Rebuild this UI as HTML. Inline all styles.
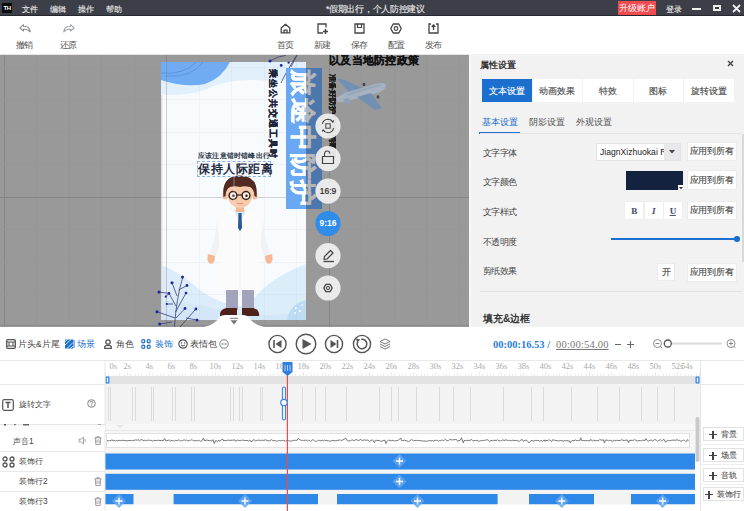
<!DOCTYPE html>
<html><head><meta charset="utf-8">
<style>
*{box-sizing:border-box;margin:0;padding:0}
html,body{width:744px;height:511px;overflow:hidden;background:#fff;font-family:"Liberation Sans",sans-serif;font-size:9px;color:#333}
.a{position:absolute}
#top{left:0;top:0;width:744px;height:16px;background:#3c3f47;border-bottom:1px solid #25282e}
#tool{left:0;top:16px;width:744px;height:39px;background:#fff}
#canvas{left:0;top:55px;width:469px;height:272px;background:#999;overflow:hidden}
#panel{left:469px;top:54px;width:275px;height:273px;background:#f2f2f2}
#tl{left:0;top:327px;width:744px;height:184px;background:#fff}
.menu{color:#ececec;font-size:8.4px;top:3.6px;line-height:11px;font-weight:500}
.tt{top:23.5px;font-size:8.5px;letter-spacing:-0.6px;color:#555;line-height:10px;white-space:nowrap}
.tb .t{position:absolute;top:24px;left:0;width:30px;text-align:center;font-size:9px;color:#555;line-height:10px}
.tab{top:25px;width:49.5px;height:23px;background:#fff;color:#444;font-size:8.8px;line-height:24px;text-align:center}
.tab.on{background:#1a6fcf;color:#fff}
.stab{top:62px;font-size:9px;color:#555;line-height:12px}
.lbl{left:14px;font-size:8.5px;letter-spacing:-0.7px;color:#444;line-height:11px;margin-top:1px}
.btn{background:#fff;border:1px solid #ebebeb;color:#444;font-size:8.5px;letter-spacing:-0.3px;text-align:center;display:flex;align-items:center;justify-content:center;white-space:nowrap;padding-top:2px}
.tbt{top:12px;font-size:8.5px;color:#444;line-height:10px;white-space:nowrap}
.rl{top:0px;font-family:"Liberation Serif",serif;font-size:8.5px;color:#aaa;line-height:10px;white-space:nowrap}
.lt{font-size:8.4px;color:#444;line-height:10px;white-space:nowrap}
.rb{left:703px;width:41px;height:14px;background:#fff;border:1px solid #e2e2e2;font-size:8px;color:#555;line-height:12px;white-space:nowrap}
.rb i{position:absolute;left:5px;top:2.5px;width:8px;height:8px}
.rb i:before{content:"";position:absolute;left:0;top:3.2px;width:8px;height:1.6px;background:#444}
.rb i:after{content:"";position:absolute;left:3.2px;top:0;width:1.6px;height:8px;background:#444}
.rb b{position:absolute;right:6px;top:1px;font-weight:normal}
.menu,.tab,.btn,.rb{-webkit-text-stroke:0.12px currentColor}
</style></head><body>
<!-- top bar -->
<div id="top" class="a">
  <div class="a" style="left:2px;top:3px;width:10px;height:10px;background:#0b0b0b;color:#fff;font-size:6px;font-weight:bold;line-height:10px;text-align:center;letter-spacing:-0.5px">TH</div>
  <div class="a menu" style="left:22px">文件</div>
  <div class="a menu" style="left:50px">编辑</div>
  <div class="a menu" style="left:78px">操作</div>
  <div class="a menu" style="left:106px">帮助</div>
  <div class="a menu" style="left:326px;font-size:8.6px;top:3.5px;letter-spacing:-0.3px">*假期出行，个人防控建议</div>
  <div class="a" style="left:618px;top:1px;width:38px;height:14px;background:#f04c50;color:#fff;font-size:9px;line-height:14px;text-align:center">升级账户</div>
  <div class="a menu" style="left:666px">登录</div>
  <div class="a" style="left:692px;top:8px;width:9px;height:2px;background:#eee"></div>
  <div class="a" style="left:713px;top:5px;width:8px;height:6px;border:2px solid #eee"></div>
  <svg class="a" style="left:732px;top:4px" width="9" height="9" viewBox="0 0 9 9"><path d="M1 1L8 8M8 1L1 8" stroke="#eee" stroke-width="1.8"/></svg>
</div>
<!-- toolbar -->
<div id="tool" class="a">
  <svg class="a" style="left:19px;top:8px" width="13" height="9" viewBox="0 0 13 9"><path d="M4.5 0.7L0.8 3.8L4.5 7V5.2Q9 5 11.2 7.8Q11 2.3 4.5 2.3Z" fill="#fff" stroke="#8a8a8a" stroke-width="1.1" stroke-linejoin="round"/></svg>
  <div class="a tt" style="left:16px;width:17px">撤销</div>
  <svg class="a" style="left:62px;top:8px" width="13" height="9" viewBox="0 0 13 9"><path d="M8.5 0.7L12.2 3.8L8.5 7V5.2Q4 5 1.8 7.8Q2 2.3 8.5 2.3Z" fill="#fff" stroke="#9a9fa8" stroke-width="1.1" stroke-linejoin="round"/></svg>
  <div class="a tt" style="left:60px;width:17px">还原</div>
  <svg class="a" style="left:280px;top:7px" width="11" height="11" viewBox="0 0 11 11"><path d="M1.2 5L5.5 1.2L9.8 5V9.8H1.2Z M4 9.8V7.2H7V9.8" fill="none" stroke="#444" stroke-width="1.3" stroke-linejoin="round"/></svg>
  <div class="a tt" style="left:277px;width:17px">首页</div>
  <svg class="a" style="left:317px;top:7px" width="12" height="11" viewBox="0 0 12 11"><path d="M9 4.5V1H1V10H6" fill="none" stroke="#444" stroke-width="1.3"/><path d="M8.5 6V11M6 8.5H11" fill="none" stroke="#444" stroke-width="1.5"/></svg>
  <div class="a tt" style="left:314px;width:17px">新建</div>
  <svg class="a" style="left:354px;top:7px" width="11" height="11" viewBox="0 0 11 11"><path d="M1 1H10V10H1Z" fill="none" stroke="#444" stroke-width="1.3"/><path d="M3.5 1V4.5H7.5V1" fill="none" stroke="#444" stroke-width="1.2"/></svg>
  <div class="a tt" style="left:351px;width:17px">保存</div>
  <svg class="a" style="left:390px;top:7px" width="12" height="11" viewBox="0 0 12 11"><path d="M3.2 1H8.8L11.2 5.5L8.8 10H3.2L0.8 5.5Z" fill="none" stroke="#444" stroke-width="1.3" stroke-linejoin="round"/><circle cx="6" cy="5.5" r="1.8" fill="none" stroke="#444" stroke-width="1.2"/></svg>
  <div class="a tt" style="left:388px;width:17px">配置</div>
  <svg class="a" style="left:428px;top:7px" width="11" height="11" viewBox="0 0 11 11"><path d="M3 1H1V10H10V1H8" fill="none" stroke="#444" stroke-width="1.3"/><path d="M5.5 7V2M3.7 3.8L5.5 2L7.3 3.8" fill="none" stroke="#444" stroke-width="1.3"/></svg>
  <div class="a tt" style="left:425px;width:17px">发布</div>
  <div class="a" style="left:0;top:38px;width:744px;height:1px;background:#e6e6e6"></div>
</div>
<!-- canvas -->
<div id="canvas" class="a">
<svg class="a" style="left:0;top:0" width="469" height="272" viewBox="0 55 469 272">
<defs><clipPath id="pc"><rect x="161" y="62" width="145" height="258"/></clipPath></defs>
<rect x="0" y="55" width="469" height="272" fill="#999"/>
<g shape-rendering="crispEdges"><line x1="0" y1="325.5" x2="469" y2="325.5" stroke="#8c8c8c"/><line x1="4.0" y1="55" x2="4.0" y2="327" stroke="#868686" stroke-width="1"/><line x1="36.5" y1="55" x2="36.5" y2="327" stroke="#959595" stroke-width="1"/><line x1="69.0" y1="55" x2="69.0" y2="327" stroke="#959595" stroke-width="1"/><line x1="101.5" y1="55" x2="101.5" y2="327" stroke="#959595" stroke-width="1"/><line x1="134.0" y1="55" x2="134.0" y2="327" stroke="#959595" stroke-width="1"/><line x1="166.5" y1="55" x2="166.5" y2="327" stroke="#868686" stroke-width="1"/><line x1="199.0" y1="55" x2="199.0" y2="327" stroke="#959595" stroke-width="1"/><line x1="231.5" y1="55" x2="231.5" y2="327" stroke="#959595" stroke-width="1"/><line x1="264.0" y1="55" x2="264.0" y2="327" stroke="#959595" stroke-width="1"/><line x1="296.5" y1="55" x2="296.5" y2="327" stroke="#959595" stroke-width="1"/><line x1="329.0" y1="55" x2="329.0" y2="327" stroke="#868686" stroke-width="1"/><line x1="361.5" y1="55" x2="361.5" y2="327" stroke="#959595" stroke-width="1"/><line x1="394.0" y1="55" x2="394.0" y2="327" stroke="#959595" stroke-width="1"/><line x1="426.5" y1="55" x2="426.5" y2="327" stroke="#959595" stroke-width="1"/><line x1="459.0" y1="55" x2="459.0" y2="327" stroke="#959595" stroke-width="1"/><line x1="0" y1="67.0" x2="469" y2="67.0" stroke="#979797" stroke-width="1"/><line x1="0" y1="99.5" x2="469" y2="99.5" stroke="#979797" stroke-width="1"/><line x1="0" y1="132.0" x2="469" y2="132.0" stroke="#979797" stroke-width="1"/><line x1="0" y1="164.5" x2="469" y2="164.5" stroke="#979797" stroke-width="1"/><line x1="0" y1="197.0" x2="469" y2="197.0" stroke="#868686" stroke-width="1"/><line x1="0" y1="229.5" x2="469" y2="229.5" stroke="#979797" stroke-width="1"/><line x1="0" y1="262.0" x2="469" y2="262.0" stroke="#979797" stroke-width="1"/><line x1="0" y1="294.5" x2="469" y2="294.5" stroke="#979797" stroke-width="1"/></g>
<g clip-path="url(#pc)">
  <rect x="161" y="62" width="145" height="258" fill="#f7fbfd"/>
  <!-- top light band -->
  <path d="M161 62H306V78Q280 82 255 80Q225 79 205 90Q180 97 161 94Z" fill="#e2f0fb"/>
  <!-- top blue -->
  <path d="M161 62H230Q222 78 205 84Q185 88 161 80Z" fill="#70acf4"/>
  <path d="M161 73Q185 75 196 62M166 76Q192 78 203 62" fill="none" stroke="#4f86cf" stroke-width="0.6"/>
  <!-- bottom waves -->
  <path d="M161 265Q180 272 200 290Q220 305 245 307Q280 310 306 300V320H161Z" fill="#dcecfa"/>
  <path d="M306 264Q285 272 270 283Q255 295 248 306Q245 315 250 320H306Z" fill="#dcedfa"/>
  <path d="M161 300Q200 304 230 312Q260 318 306 312V320H161Z" fill="#d3e7f8"/>
  <path d="M306 300Q290 304 287 320H306Z" fill="#bedbf4"/>
  <circle cx="296" cy="308" r="1" fill="#fff"/><circle cx="300" cy="311" r="0.9" fill="#fff"/><circle cx="295" cy="313" r="0.9" fill="#fff"/><circle cx="302" cy="305" r="0.8" fill="#fff"/>
  <!-- grid overlay on poster -->
  <g shape-rendering="crispEdges" opacity="0.07"><line x1="4.0" y1="55" x2="4.0" y2="327" stroke="#868686" stroke-width="1"/><line x1="36.5" y1="55" x2="36.5" y2="327" stroke="#959595" stroke-width="1"/><line x1="69.0" y1="55" x2="69.0" y2="327" stroke="#959595" stroke-width="1"/><line x1="101.5" y1="55" x2="101.5" y2="327" stroke="#959595" stroke-width="1"/><line x1="134.0" y1="55" x2="134.0" y2="327" stroke="#959595" stroke-width="1"/><line x1="166.5" y1="55" x2="166.5" y2="327" stroke="#868686" stroke-width="1"/><line x1="199.0" y1="55" x2="199.0" y2="327" stroke="#959595" stroke-width="1"/><line x1="231.5" y1="55" x2="231.5" y2="327" stroke="#959595" stroke-width="1"/><line x1="264.0" y1="55" x2="264.0" y2="327" stroke="#959595" stroke-width="1"/><line x1="296.5" y1="55" x2="296.5" y2="327" stroke="#959595" stroke-width="1"/><line x1="329.0" y1="55" x2="329.0" y2="327" stroke="#868686" stroke-width="1"/><line x1="361.5" y1="55" x2="361.5" y2="327" stroke="#959595" stroke-width="1"/><line x1="394.0" y1="55" x2="394.0" y2="327" stroke="#959595" stroke-width="1"/><line x1="426.5" y1="55" x2="426.5" y2="327" stroke="#959595" stroke-width="1"/><line x1="459.0" y1="55" x2="459.0" y2="327" stroke="#959595" stroke-width="1"/><line x1="0" y1="67.0" x2="469" y2="67.0" stroke="#979797" stroke-width="1"/><line x1="0" y1="99.5" x2="469" y2="99.5" stroke="#979797" stroke-width="1"/><line x1="0" y1="132.0" x2="469" y2="132.0" stroke="#979797" stroke-width="1"/><line x1="0" y1="164.5" x2="469" y2="164.5" stroke="#979797" stroke-width="1"/><line x1="0" y1="197.0" x2="469" y2="197.0" stroke="#868686" stroke-width="1"/><line x1="0" y1="229.5" x2="469" y2="229.5" stroke="#979797" stroke-width="1"/><line x1="0" y1="262.0" x2="469" y2="262.0" stroke="#979797" stroke-width="1"/><line x1="0" y1="294.5" x2="469" y2="294.5" stroke="#979797" stroke-width="1"/></g>
  <rect x="161" y="95" width="1.5" height="225" fill="#e0e0e0"/><line x1="166.5" y1="62" x2="166.5" y2="320" stroke="#7d7d7d" stroke-width="1" opacity="0.3" shape-rendering="crispEdges"/><line x1="161" y1="197" x2="306" y2="197" stroke="#7d7d7d" stroke-width="1" opacity="0.25" shape-rendering="crispEdges"/>
</g>

<!-- outside elements (dimmed) -->
<g>
  <!-- plane -->
  <g>
    <path d="M337 78.5L345 80L365 89.5L351 94Z" fill="#7290b3"/>
    <path d="M341 89L344 89L349 96L345 98Z" fill="#8aa0bb"/>
    <path d="M336 98L346 92.5L377 83.5Q386 82 386 86Q385 90.5 377 93L348 101L338 102.5Z" fill="#a6b2c1"/>
    <path d="M346 93.5L376 85Q381 84 383 85L348 96Z" fill="#98a8bb"/>
    <path d="M357 97L371 93L382 108.5L375 110Z" fill="#7290b3"/>
    <path d="M343 99L349 98L350 104L347 104Z" fill="#8aa0bb"/>
    <ellipse cx="364" cy="84.5" rx="1.4" ry="1.8" fill="#445"/>
    <ellipse cx="378" cy="97" rx="1.4" ry="1.8" fill="#445"/>
  </g>
</g>

<!-- top plant -->
<g stroke="#3d3f6d" stroke-width="0.8" fill="none"><path d="M270 61Q278 56 286 55.3"/><path d="M281 83Q286 72 297 55"/><path d="M291 67L297 55"/></g>
<g fill="#1f23a8"><circle cx="270" cy="61" r="1.5"/><circle cx="281.2" cy="65.4" r="1.4"/><circle cx="288.6" cy="62.7" r="1.1"/></g>
<!-- plant -->
<g stroke="#3b3f70" stroke-width="0.8" fill="none">
  <path d="M174.5 327Q176 300 183 276"/>
  <path d="M177 296L172 282.7M178.5 290L187 285.5M176 306L169 293.4L159 292M169 293.4L165.8 296.7M175.5 312L186 293M175 318L157 311.7M172 322L159.7 324M176 318L185 308.5M180 327L195.9 309M186 318L197 320M173 304L166.8 304"/>
</g>
<g fill="#1f23a8">
  <circle cx="182.5" cy="277" r="1.5"/><circle cx="172" cy="282.7" r="1.5"/><circle cx="187" cy="285.5" r="1.4"/><circle cx="159" cy="292" r="1.5"/>
  <circle cx="169" cy="293.4" r="1.3"/><circle cx="186" cy="293" r="1.3"/><circle cx="165.8" cy="296.7" r="1.1"/><circle cx="185" cy="308.5" r="1.4"/>
  <circle cx="157" cy="311.7" r="1.5"/><circle cx="195.9" cy="309" r="1.4"/><circle cx="159.7" cy="324" r="1.5"/><circle cx="197" cy="320" r="1.5"/><circle cx="166.8" cy="304" r="1.1"/>
</g>
<!-- character -->
<g>
  <!-- arms -->
  <path d="M222 214Q216 222 214 240L209 256L215 258L222 240Z" fill="#f2f2f2"/>
  <path d="M258 214Q264 222 266 240L271 256L265 258L258 240Z" fill="#f2f2f2"/>
  <path d="M208 254Q206 262 211 264Q215 263 215 256Z" fill="#f4b894"/>
  <path d="M272 254Q274 262 269 264Q265 263 265 256Z" fill="#f4b894"/>
  <!-- pants -->
  <rect x="226" y="286" width="12" height="24" fill="#a3a3bd"/>
  <rect x="242" y="286" width="12" height="24" fill="#a3a3bd"/>
  <!-- shoes -->
  <path d="M220 316Q219 310 226 308H237V316Z" fill="#4d2219"/>
  <path d="M259 316Q260 310 253 308H242V316Z" fill="#4d2219"/>
  <!-- coat -->
  <path d="M224 212L236 208H244L256 212Q262 216 262 226L258 290H222L218 226Q218 216 224 212Z" fill="#fbfbfb"/>
  <path d="M240 212V290" stroke="#e6e6e6" stroke-width="0.6"/>
  <path d="M234 210L240 222L246 210" fill="#d5e6f4"/>
  <path d="M238.5 213H241.5L242 228L240 231L238 228Z" fill="#2a5597"/>
  <!-- neck -->
  <rect x="236" y="204" width="8" height="8" fill="#f0b894"/>
  <!-- head -->
  <ellipse cx="225" cy="196" rx="2.5" ry="3.5" fill="#f2bc98"/>
  <ellipse cx="255" cy="196" rx="2.5" ry="3.5" fill="#f2bc98"/>
  <path d="M226 182Q225.5 207 240 208.5Q254.5 207 254 182Z" fill="#f7caa9"/>
  <path d="M223.5 197Q221 176 240 175.5Q259 176 256.5 197L254.5 196Q254 189 250 187Q244 185.5 240 187Q235 185.5 230 187Q226 189 225.5 196Z" fill="#522a22"/>
  <circle cx="233" cy="195.5" r="3.9" fill="#fbeee6" stroke="#3a2521" stroke-width="1.5"/>
  <circle cx="246" cy="195.5" r="3.9" fill="#fbeee6" stroke="#3a2521" stroke-width="1.5"/>
  <path d="M236.9 195H242.1" stroke="#3a2521" stroke-width="1.2"/>
  <circle cx="233.5" cy="195.8" r="1.2" fill="#2a1a18"/><circle cx="246.5" cy="195.8" r="1.2" fill="#2a1a18"/>
  <path d="M237 203Q240 204.5 243 203" stroke="#e58c86" stroke-width="1.1" fill="none"/>
  <path d="M234 176V212" stroke="#eef" stroke-width="0.6" opacity="0.7"/>
</g>
<!-- banner -->
<rect x="286" y="68" width="36" height="141" fill="#6aa8f4"/>
</svg>

<div class="a" style="left:329px;top:-1px;font-size:10.5px;font-weight:900;color:#111;-webkit-text-stroke:0.2px #111;line-height:12px;white-space:nowrap;letter-spacing:0.3px">以及当地防控政策</div>
<div class="a" style="left:197px;top:106px;width:74px;height:16px;border:1px dashed #8fb3e0"></div>
<div class="a" style="left:198px;top:108px;font-size:11.5px;font-weight:bold;color:#1b2740;line-height:13px;white-space:nowrap;letter-spacing:0.6px">保持人际距离</div>
<div class="a" style="left:198px;top:97px;font-size:6.5px;font-weight:900;color:#2b3448;line-height:7px;white-space:nowrap;letter-spacing:0.2px">应该注意错时错峰出行</div>
<div class="a" style="left:268px;top:14px;width:10px;height:90px;overflow:hidden"><div style="position:absolute;left:10px;top:0;transform-origin:0 0;transform:rotate(90deg);font-size:9px;font-weight:900;color:#1b2236;-webkit-text-stroke:0.2px #1b2236;line-height:10px;letter-spacing:1px;white-space:nowrap">乘坐公共交通工具时</div></div>
<div class="a" style="left:287px;top:14px;width:30px;height:141px;overflow:hidden"><div style="position:absolute;left:30px;top:1px;transform-origin:0 0;transform:rotate(90deg);font-size:26px;font-weight:900;color:#fff;line-height:29px;white-space:nowrap;letter-spacing:1.6px;-webkit-text-stroke:0.35px #fff">旅途中防护</div></div>
<div class="a" style="left:306px;top:13px;width:16px;height:141px;background:rgba(0,0,0,0.29)"></div>
<div class="a" style="left:328px;top:19px;width:8px;height:112px;overflow:hidden"><div style="position:absolute;left:8px;top:0;transform-origin:0 0;transform:rotate(90deg);font-size:7.5px;font-weight:900;color:#1a1a1a;-webkit-text-stroke:0.25px #1a1a1a;line-height:8px;white-space:nowrap">准备好防护 口罩 消毒液</div></div>

<svg class="a" style="left:312px;top:55px" width="32" height="250" viewBox="312 110 32 250">
  <g fill="#eeeeee" fill-opacity="0.95">
    <circle cx="328" cy="126" r="12.6"/><circle cx="328" cy="158.6" r="12.6"/><circle cx="328" cy="191.2" r="12.6"/>
    <circle cx="328" cy="255.7" r="12.6"/><circle cx="328" cy="288" r="12.6"/>
  </g>
  <circle cx="328" cy="223.5" r="12.6" fill="#2f8ce8"/>
  <g fill="none" stroke="#444" stroke-width="1.1">
    <path d="M322.5 124Q323 119.5 328 119.3Q331.5 119.5 333 122M333.5 128Q333 132.5 328 132.7Q324.5 132.5 323 130"/>
    <path d="M331.3 121.5L333.2 122.3L333.6 120.2M324.7 130.5L322.8 129.7L322.4 131.8" stroke-width="0.9"/>
    <rect x="325.8" y="123.8" width="4.4" height="4.4" stroke-width="1"/>
    <path d="M322.5 156.5H333.5V163.5H322.5Z" stroke-width="1.2"/>
    <path d="M324.5 156.5V154Q324.5 151 327.2 151Q329.6 151 329.8 153.5"/>
    <path d="M323.5 261.5H334" stroke-width="1.3"/>
    <path d="M324 259.5L324.5 256.5L330.5 250.5L333 253L327 259Z" stroke-width="1.2" stroke-linejoin="round"/>
    <path d="M323.8 288L325.9 284.4H330.1L332.2 288L330.1 291.6H325.9Z" stroke-width="1.3" stroke-linejoin="round"/>
    <circle cx="328" cy="288" r="1.5" stroke-width="1.1"/>
  </g>
</svg>
<div class="a" style="left:314px;top:131px;width:28px;text-align:center;font-size:8.5px;color:#2a2a2a;line-height:10px;-webkit-text-stroke:0.2px #2a2a2a">16:9</div>
<div class="a" style="left:314px;top:163px;width:28px;text-align:center;font-size:8.5px;font-weight:bold;color:#fff;line-height:10px">9:16</div>
<svg class="a" style="left:200px;top:259px" width="68" height="13" viewBox="200 314 68 13">
  <path d="M204 327Q214 325 219 318Q221 315 225 315H243Q247 315 249 318Q254 325 264 327Z" fill="#fff"/>
  <path d="M230 318.3H238" stroke="#777" stroke-width="1"/>
  <path d="M230.5 320.3H237.5L234 324.5Z" fill="#777"/>
</svg>
</div>
<!-- panel -->
<div id="panel" class="a">
  <div class="a" style="left:0;top:0;width:2px;height:273px;background:#f8f8f8"></div>
  <div class="a" style="left:11px;top:5px;font-size:9px;font-weight:bold;color:#333;line-height:12px">属性设置</div>
  <svg class="a" style="left:258px;top:6px" width="7" height="7" viewBox="0 0 7 7"><path d="M1 1L6 6M6 1L1 6" stroke="#444" stroke-width="1.4"/></svg>
  <div class="a tab on" style="left:13px">文本设置</div>
  <div class="a tab" style="left:63.5px">动画效果</div>
  <div class="a tab" style="left:114px">特效</div>
  <div class="a tab" style="left:164.5px">图标</div>
  <div class="a tab" style="left:215px">旋转设置</div>
  <div class="a stab" style="left:13px;color:#1a6fcf">基本设置</div>
  <div class="a stab" style="left:60px">阴影设置</div>
  <div class="a stab" style="left:107px">外观设置</div>
  <div class="a" style="left:10px;top:77.5px;width:41px;height:2.5px;background:#1a6fcf"></div>
  <div class="a" style="left:11px;top:79px;width:262px;height:1px;background:#e4e4e4"></div>
  <div class="a lbl" style="top:93px">文字字体</div>
  <div class="a lbl" style="top:122px">文字颜色</div>
  <div class="a lbl" style="top:152px">文字样式</div>
  <div class="a lbl" style="top:182px">不透明度</div>
  <div class="a lbl" style="top:211px">剪纸效果</div>
  <div class="a" style="left:127px;top:89px;width:85px;height:18px;background:#fff;border:1px solid #e3e3e3"></div>
  <div class="a" style="left:131px;top:93px;font-size:8.6px;color:#222;line-height:10px;white-space:nowrap;width:65px;overflow:hidden">JiagnXizhuokai Regular</div>
  <div class="a" style="left:195px;top:90px;width:16px;height:16px;background:#e9e9ec"></div>
  <svg class="a" style="left:200px;top:96px" width="6" height="4" viewBox="0 0 6 4"><path d="M0 0H6L3 3.5Z" fill="#444"/></svg>
  <div class="a" style="left:157px;top:117px;width:57px;height:19px;background:#13223f"></div>
  <div class="a" style="left:209px;top:131px;width:5px;height:5px;background:#fff"></div>
  <svg class="a" style="left:209.5px;top:132.5px" width="4" height="3" viewBox="0 0 4 3"><path d="M0 0H4L2 2.5Z" fill="#333"/></svg>
  <div class="a btn" style="left:217.5px;top:87.5px;width:50px;height:19px">应用到所有</div>
  <div class="a btn" style="left:217.5px;top:116px;width:50px;height:20px">应用到所有</div>
  <div class="a btn" style="left:155px;top:147px;width:20px;height:19px;padding-top:0;border-color:#eee;font-family:'Liberation Serif',serif;font-weight:bold;color:#4a5470;font-size:9px">B</div>
  <div class="a btn" style="left:174.5px;top:147px;width:20px;height:19px;padding-top:0;border-color:#eee;font-family:'Liberation Serif',serif;font-style:italic;font-weight:bold;color:#4a5470;font-size:9px">I</div>
  <div class="a btn" style="left:194px;top:147px;width:19.5px;height:19px;padding-top:0;border-color:#eee;font-family:'Liberation Serif',serif;text-decoration:underline;font-weight:bold;color:#4a5470;font-size:9px">U</div>
  <div class="a btn" style="left:217.5px;top:146.5px;width:50px;height:19px">应用到所有</div>
  <div class="a" style="left:142px;top:184px;width:126px;height:2px;background:#1a6fcf"></div>
  <div class="a" style="left:265px;top:182.3px;width:5.5px;height:5.5px;border-radius:50%;background:#1a6fcf"></div>
  <div class="a btn" style="left:188px;top:209px;width:18px;height:18px">开</div>
  <div class="a btn" style="left:217.5px;top:208.5px;width:50px;height:19px">应用到所有</div>
  <div class="a" style="left:11px;top:237px;width:262px;height:1px;background:#e2e2e2"></div>
  <div class="a" style="left:14px;top:259px;font-size:10px;font-weight:bold;color:#333;line-height:12px">填充&amp;边框</div>
  <div class="a" style="left:272.5px;top:80px;width:2.5px;height:128px;background:#d9d9d9"></div>
</div>
<!-- timeline -->
<div id="tl" class="a">
  <!-- toolbar row -->
  <svg class="a" style="left:6px;top:12px" width="10" height="10" viewBox="0 0 10 10"><rect x="0.7" y="0.7" width="8.6" height="8.6" rx="1" fill="none" stroke="#555" stroke-width="1.3"/><path d="M0.7 3H9.3M0.7 7H9.3M3 3V7M7 3V7" stroke="#555" stroke-width="1"/></svg>
  <div class="a tbt" style="left:18px">片头&amp;片尾</div>
  <svg class="a" style="left:65px;top:12px" width="10" height="10" viewBox="0 0 10 10"><rect x="0" y="0.5" width="8" height="9" fill="#1a6fcf"/><path d="M0 6L6 0.5M2 9.5L8 3.5M0 2.5L2.5 0.5M5.5 9.5L8 7" stroke="#fff" stroke-width="0.8"/><path d="M9 1V9" stroke="#1a6fcf" stroke-width="1"/></svg>
  <div class="a tbt" style="left:77px;color:#1a6fcf">场景</div>
  <svg class="a" style="left:104px;top:12px" width="8" height="10" viewBox="0 0 8 10"><circle cx="4" cy="3" r="2.2" fill="none" stroke="#555" stroke-width="1.3"/><path d="M0.7 9.5V8Q0.7 6.3 4 6.3Q7.3 6.3 7.3 8V9.5Z" fill="none" stroke="#555" stroke-width="1.3"/></svg>
  <div class="a tbt" style="left:116px">角色</div>
  <svg class="a" style="left:141px;top:12px" width="10" height="10" viewBox="0 0 10 10"><g fill="none" stroke="#1a6fcf" stroke-width="1.2"><circle cx="2.3" cy="2.3" r="1.6"/><circle cx="7.7" cy="2.3" r="1.6"/><circle cx="2.3" cy="7.7" r="1.6"/><circle cx="7.7" cy="7.7" r="1.6"/></g></svg>
  <div class="a tbt" style="left:155px;color:#1a6fcf">装饰</div>
  <svg class="a" style="left:178px;top:12px" width="10" height="10" viewBox="0 0 10 10"><circle cx="5" cy="5" r="4.2" fill="none" stroke="#555" stroke-width="1.2"/><circle cx="3.5" cy="4" r="0.7" fill="#555"/><circle cx="6.5" cy="4" r="0.7" fill="#555"/><path d="M3 6Q5 8 7 6" fill="none" stroke="#555" stroke-width="1"/></svg>
  <div class="a tbt" style="left:190px">表情包</div>
  <svg class="a" style="left:219px;top:12px" width="10" height="10" viewBox="0 0 10 10"><circle cx="5" cy="5" r="4.3" fill="none" stroke="#777" stroke-width="0.9"/><circle cx="3" cy="5" r="0.75" fill="#777"/><circle cx="5" cy="5" r="0.75" fill="#777"/><circle cx="7" cy="5" r="0.75" fill="#777"/></svg>
  <svg class="a" style="left:266px;top:5px" width="130" height="23" viewBox="266 332 130 23">
    <g fill="none" stroke="#555" stroke-width="1.4">
      <circle cx="277.5" cy="344" r="8.6"/><circle cx="306" cy="344" r="9.8"/><circle cx="334" cy="344" r="8.6"/><circle cx="362" cy="344" r="8.6"/>
      <path d="M357.84 341.6A4.8 4.8 0 1 0 361.17 339.27" stroke-width="1.5"/>
    </g>
    <path d="M274 340V348" stroke="#555" stroke-width="1.6"/><path d="M281.5 340L275.5 344L281.5 348Z" fill="#555"/>
    <path d="M302.5 339L311.5 344L302.5 349Z" fill="#555"/>
    <path d="M337.5 340V348" stroke="#555" stroke-width="1.6"/><path d="M330.5 340L336.5 344L330.5 348Z" fill="#555"/>
    <path d="M356 338.6L360.2 339.6L357.2 342.8Z" fill="#555"/>
    <g fill="none" stroke="#666" stroke-width="0.9"><path d="M385 339L390 341.5L385 344L380 341.5Z"/><path d="M380 344L385 346.5L390 344M380 346.5L385 349L390 346.5"/></g>
  </svg>
  <div class="a" style="left:493px;top:12px;font-family:'Liberation Serif',serif;font-weight:bold;font-size:10.5px;color:#2a7ee0;line-height:11px;white-space:nowrap">00:00:16.53 <span style="font-weight:bold">/</span></div>
  <div class="a" style="left:556px;top:12px;font-family:'Liberation Serif',serif;font-size:10.5px;letter-spacing:0.2px;color:#777;line-height:11px;text-decoration:underline;white-space:nowrap">00:00:54.00</div>
  <div class="a" style="left:614.5px;top:16.5px;width:6px;height:1px;background:#666"></div>
  <div class="a" style="left:627px;top:16.5px;width:7px;height:1px;background:#666"></div>
  <div class="a" style="left:630px;top:13.5px;width:1px;height:7px;background:#666"></div>
  <svg class="a" style="left:652px;top:11px" width="86" height="12" viewBox="652 338 86 12">
    <g fill="none" stroke="#888" stroke-width="1"><circle cx="657.5" cy="343.5" r="4"/><path d="M660.5 346.5L662 348M655.5 343.5H659.5"/><circle cx="731" cy="343.5" r="4"/><path d="M734 346.5L735.5 348M729 343.5H733M731 341.5V345.5"/></g>
    <path d="M671 343.5H722" stroke="#dadada" stroke-width="1.8"/>
    <circle cx="667.8" cy="343.5" r="3.5" fill="#fff" stroke="#555" stroke-width="1.3"/>
  </svg>
  <div class="a" style="left:0;top:33px;width:744px;height:1px;background:#e6e6e6"></div>
  <!-- ruler -->
    <div class="a" style="left:0;top:34px;width:744px;height:23px;overflow:hidden"><div class="a rl" style="left:109.5px">0s</div><div class="a rl" style="left:123.5px">2s</div><div class="a rl" style="left:145.5px">4s</div><div class="a rl" style="left:167.5px">6s</div><div class="a rl" style="left:189.5px">8s</div><div class="a rl" style="left:209.5px">10s</div><div class="a rl" style="left:231.5px">12s</div><div class="a rl" style="left:253.5px">14s</div><div class="a rl" style="left:275.5px">16s</div><div class="a rl" style="left:297.5px">18s</div><div class="a rl" style="left:319.5px">20s</div><div class="a rl" style="left:341.5px">22s</div><div class="a rl" style="left:363.5px">24s</div><div class="a rl" style="left:385.5px">26s</div><div class="a rl" style="left:407.5px">28s</div><div class="a rl" style="left:429.5px">30s</div><div class="a rl" style="left:451.5px">32s</div><div class="a rl" style="left:473.5px">34s</div><div class="a rl" style="left:495.5px">36s</div><div class="a rl" style="left:517.5px">38s</div><div class="a rl" style="left:539.5px">40s</div><div class="a rl" style="left:561.5px">42s</div><div class="a rl" style="left:583.5px">44s</div><div class="a rl" style="left:605.5px">46s</div><div class="a rl" style="left:627.5px">48s</div><div class="a rl" style="left:649.5px">50s</div><div class="a rl" style="left:671.5px">52s</div><div class="a rl" style="left:681px">54s</div></div>
  <svg class="a" style="left:0;top:0" width="744" height="184" viewBox="0 327 744 184">
    <g shape-rendering="crispEdges"><rect x="105.00" y="372" width="0.8" height="4" fill="#ececec"/><rect x="107.75" y="374" width="0.8" height="2" fill="#ececec"/><rect x="110.50" y="374" width="0.8" height="2" fill="#ececec"/><rect x="113.25" y="374" width="0.8" height="2" fill="#ececec"/><rect x="116.00" y="374" width="0.8" height="2" fill="#ececec"/><rect x="118.75" y="374" width="0.8" height="2" fill="#ececec"/><rect x="121.50" y="374" width="0.8" height="2" fill="#ececec"/><rect x="124.25" y="374" width="0.8" height="2" fill="#ececec"/><rect x="127.00" y="372" width="0.8" height="4" fill="#ececec"/><rect x="129.75" y="374" width="0.8" height="2" fill="#ececec"/><rect x="132.50" y="374" width="0.8" height="2" fill="#ececec"/><rect x="135.25" y="374" width="0.8" height="2" fill="#ececec"/><rect x="138.00" y="374" width="0.8" height="2" fill="#ececec"/><rect x="140.75" y="374" width="0.8" height="2" fill="#ececec"/><rect x="143.50" y="374" width="0.8" height="2" fill="#ececec"/><rect x="146.25" y="374" width="0.8" height="2" fill="#ececec"/><rect x="149.00" y="372" width="0.8" height="4" fill="#ececec"/><rect x="151.75" y="374" width="0.8" height="2" fill="#ececec"/><rect x="154.50" y="374" width="0.8" height="2" fill="#ececec"/><rect x="157.25" y="374" width="0.8" height="2" fill="#ececec"/><rect x="160.00" y="374" width="0.8" height="2" fill="#ececec"/><rect x="162.75" y="374" width="0.8" height="2" fill="#ececec"/><rect x="165.50" y="374" width="0.8" height="2" fill="#ececec"/><rect x="168.25" y="374" width="0.8" height="2" fill="#ececec"/><rect x="171.00" y="372" width="0.8" height="4" fill="#ececec"/><rect x="173.75" y="374" width="0.8" height="2" fill="#ececec"/><rect x="176.50" y="374" width="0.8" height="2" fill="#ececec"/><rect x="179.25" y="374" width="0.8" height="2" fill="#ececec"/><rect x="182.00" y="374" width="0.8" height="2" fill="#ececec"/><rect x="184.75" y="374" width="0.8" height="2" fill="#ececec"/><rect x="187.50" y="374" width="0.8" height="2" fill="#ececec"/><rect x="190.25" y="374" width="0.8" height="2" fill="#ececec"/><rect x="193.00" y="372" width="0.8" height="4" fill="#ececec"/><rect x="195.75" y="374" width="0.8" height="2" fill="#ececec"/><rect x="198.50" y="374" width="0.8" height="2" fill="#ececec"/><rect x="201.25" y="374" width="0.8" height="2" fill="#ececec"/><rect x="204.00" y="374" width="0.8" height="2" fill="#ececec"/><rect x="206.75" y="374" width="0.8" height="2" fill="#ececec"/><rect x="209.50" y="374" width="0.8" height="2" fill="#ececec"/><rect x="212.25" y="374" width="0.8" height="2" fill="#ececec"/><rect x="215.00" y="372" width="0.8" height="4" fill="#ececec"/><rect x="217.75" y="374" width="0.8" height="2" fill="#ececec"/><rect x="220.50" y="374" width="0.8" height="2" fill="#ececec"/><rect x="223.25" y="374" width="0.8" height="2" fill="#ececec"/><rect x="226.00" y="374" width="0.8" height="2" fill="#ececec"/><rect x="228.75" y="374" width="0.8" height="2" fill="#ececec"/><rect x="231.50" y="374" width="0.8" height="2" fill="#ececec"/><rect x="234.25" y="374" width="0.8" height="2" fill="#ececec"/><rect x="237.00" y="372" width="0.8" height="4" fill="#ececec"/><rect x="239.75" y="374" width="0.8" height="2" fill="#ececec"/><rect x="242.50" y="374" width="0.8" height="2" fill="#ececec"/><rect x="245.25" y="374" width="0.8" height="2" fill="#ececec"/><rect x="248.00" y="374" width="0.8" height="2" fill="#ececec"/><rect x="250.75" y="374" width="0.8" height="2" fill="#ececec"/><rect x="253.50" y="374" width="0.8" height="2" fill="#ececec"/><rect x="256.25" y="374" width="0.8" height="2" fill="#ececec"/><rect x="259.00" y="372" width="0.8" height="4" fill="#ececec"/><rect x="261.75" y="374" width="0.8" height="2" fill="#ececec"/><rect x="264.50" y="374" width="0.8" height="2" fill="#ececec"/><rect x="267.25" y="374" width="0.8" height="2" fill="#ececec"/><rect x="270.00" y="374" width="0.8" height="2" fill="#ececec"/><rect x="272.75" y="374" width="0.8" height="2" fill="#ececec"/><rect x="275.50" y="374" width="0.8" height="2" fill="#ececec"/><rect x="278.25" y="374" width="0.8" height="2" fill="#ececec"/><rect x="281.00" y="372" width="0.8" height="4" fill="#ececec"/><rect x="283.75" y="374" width="0.8" height="2" fill="#ececec"/><rect x="286.50" y="374" width="0.8" height="2" fill="#ececec"/><rect x="289.25" y="374" width="0.8" height="2" fill="#ececec"/><rect x="292.00" y="374" width="0.8" height="2" fill="#ececec"/><rect x="294.75" y="374" width="0.8" height="2" fill="#ececec"/><rect x="297.50" y="374" width="0.8" height="2" fill="#ececec"/><rect x="300.25" y="374" width="0.8" height="2" fill="#ececec"/><rect x="303.00" y="372" width="0.8" height="4" fill="#ececec"/><rect x="305.75" y="374" width="0.8" height="2" fill="#ececec"/><rect x="308.50" y="374" width="0.8" height="2" fill="#ececec"/><rect x="311.25" y="374" width="0.8" height="2" fill="#ececec"/><rect x="314.00" y="374" width="0.8" height="2" fill="#ececec"/><rect x="316.75" y="374" width="0.8" height="2" fill="#ececec"/><rect x="319.50" y="374" width="0.8" height="2" fill="#ececec"/><rect x="322.25" y="374" width="0.8" height="2" fill="#ececec"/><rect x="325.00" y="372" width="0.8" height="4" fill="#ececec"/><rect x="327.75" y="374" width="0.8" height="2" fill="#ececec"/><rect x="330.50" y="374" width="0.8" height="2" fill="#ececec"/><rect x="333.25" y="374" width="0.8" height="2" fill="#ececec"/><rect x="336.00" y="374" width="0.8" height="2" fill="#ececec"/><rect x="338.75" y="374" width="0.8" height="2" fill="#ececec"/><rect x="341.50" y="374" width="0.8" height="2" fill="#ececec"/><rect x="344.25" y="374" width="0.8" height="2" fill="#ececec"/><rect x="347.00" y="372" width="0.8" height="4" fill="#ececec"/><rect x="349.75" y="374" width="0.8" height="2" fill="#ececec"/><rect x="352.50" y="374" width="0.8" height="2" fill="#ececec"/><rect x="355.25" y="374" width="0.8" height="2" fill="#ececec"/><rect x="358.00" y="374" width="0.8" height="2" fill="#ececec"/><rect x="360.75" y="374" width="0.8" height="2" fill="#ececec"/><rect x="363.50" y="374" width="0.8" height="2" fill="#ececec"/><rect x="366.25" y="374" width="0.8" height="2" fill="#ececec"/><rect x="369.00" y="372" width="0.8" height="4" fill="#ececec"/><rect x="371.75" y="374" width="0.8" height="2" fill="#ececec"/><rect x="374.50" y="374" width="0.8" height="2" fill="#ececec"/><rect x="377.25" y="374" width="0.8" height="2" fill="#ececec"/><rect x="380.00" y="374" width="0.8" height="2" fill="#ececec"/><rect x="382.75" y="374" width="0.8" height="2" fill="#ececec"/><rect x="385.50" y="374" width="0.8" height="2" fill="#ececec"/><rect x="388.25" y="374" width="0.8" height="2" fill="#ececec"/><rect x="391.00" y="372" width="0.8" height="4" fill="#ececec"/><rect x="393.75" y="374" width="0.8" height="2" fill="#ececec"/><rect x="396.50" y="374" width="0.8" height="2" fill="#ececec"/><rect x="399.25" y="374" width="0.8" height="2" fill="#ececec"/><rect x="402.00" y="374" width="0.8" height="2" fill="#ececec"/><rect x="404.75" y="374" width="0.8" height="2" fill="#ececec"/><rect x="407.50" y="374" width="0.8" height="2" fill="#ececec"/><rect x="410.25" y="374" width="0.8" height="2" fill="#ececec"/><rect x="413.00" y="372" width="0.8" height="4" fill="#ececec"/><rect x="415.75" y="374" width="0.8" height="2" fill="#ececec"/><rect x="418.50" y="374" width="0.8" height="2" fill="#ececec"/><rect x="421.25" y="374" width="0.8" height="2" fill="#ececec"/><rect x="424.00" y="374" width="0.8" height="2" fill="#ececec"/><rect x="426.75" y="374" width="0.8" height="2" fill="#ececec"/><rect x="429.50" y="374" width="0.8" height="2" fill="#ececec"/><rect x="432.25" y="374" width="0.8" height="2" fill="#ececec"/><rect x="435.00" y="372" width="0.8" height="4" fill="#ececec"/><rect x="437.75" y="374" width="0.8" height="2" fill="#ececec"/><rect x="440.50" y="374" width="0.8" height="2" fill="#ececec"/><rect x="443.25" y="374" width="0.8" height="2" fill="#ececec"/><rect x="446.00" y="374" width="0.8" height="2" fill="#ececec"/><rect x="448.75" y="374" width="0.8" height="2" fill="#ececec"/><rect x="451.50" y="374" width="0.8" height="2" fill="#ececec"/><rect x="454.25" y="374" width="0.8" height="2" fill="#ececec"/><rect x="457.00" y="372" width="0.8" height="4" fill="#ececec"/><rect x="459.75" y="374" width="0.8" height="2" fill="#ececec"/><rect x="462.50" y="374" width="0.8" height="2" fill="#ececec"/><rect x="465.25" y="374" width="0.8" height="2" fill="#ececec"/><rect x="468.00" y="374" width="0.8" height="2" fill="#ececec"/><rect x="470.75" y="374" width="0.8" height="2" fill="#ececec"/><rect x="473.50" y="374" width="0.8" height="2" fill="#ececec"/><rect x="476.25" y="374" width="0.8" height="2" fill="#ececec"/><rect x="479.00" y="372" width="0.8" height="4" fill="#ececec"/><rect x="481.75" y="374" width="0.8" height="2" fill="#ececec"/><rect x="484.50" y="374" width="0.8" height="2" fill="#ececec"/><rect x="487.25" y="374" width="0.8" height="2" fill="#ececec"/><rect x="490.00" y="374" width="0.8" height="2" fill="#ececec"/><rect x="492.75" y="374" width="0.8" height="2" fill="#ececec"/><rect x="495.50" y="374" width="0.8" height="2" fill="#ececec"/><rect x="498.25" y="374" width="0.8" height="2" fill="#ececec"/><rect x="501.00" y="372" width="0.8" height="4" fill="#ececec"/><rect x="503.75" y="374" width="0.8" height="2" fill="#ececec"/><rect x="506.50" y="374" width="0.8" height="2" fill="#ececec"/><rect x="509.25" y="374" width="0.8" height="2" fill="#ececec"/><rect x="512.00" y="374" width="0.8" height="2" fill="#ececec"/><rect x="514.75" y="374" width="0.8" height="2" fill="#ececec"/><rect x="517.50" y="374" width="0.8" height="2" fill="#ececec"/><rect x="520.25" y="374" width="0.8" height="2" fill="#ececec"/><rect x="523.00" y="372" width="0.8" height="4" fill="#ececec"/><rect x="525.75" y="374" width="0.8" height="2" fill="#ececec"/><rect x="528.50" y="374" width="0.8" height="2" fill="#ececec"/><rect x="531.25" y="374" width="0.8" height="2" fill="#ececec"/><rect x="534.00" y="374" width="0.8" height="2" fill="#ececec"/><rect x="536.75" y="374" width="0.8" height="2" fill="#ececec"/><rect x="539.50" y="374" width="0.8" height="2" fill="#ececec"/><rect x="542.25" y="374" width="0.8" height="2" fill="#ececec"/><rect x="545.00" y="372" width="0.8" height="4" fill="#ececec"/><rect x="547.75" y="374" width="0.8" height="2" fill="#ececec"/><rect x="550.50" y="374" width="0.8" height="2" fill="#ececec"/><rect x="553.25" y="374" width="0.8" height="2" fill="#ececec"/><rect x="556.00" y="374" width="0.8" height="2" fill="#ececec"/><rect x="558.75" y="374" width="0.8" height="2" fill="#ececec"/><rect x="561.50" y="374" width="0.8" height="2" fill="#ececec"/><rect x="564.25" y="374" width="0.8" height="2" fill="#ececec"/><rect x="567.00" y="372" width="0.8" height="4" fill="#ececec"/><rect x="569.75" y="374" width="0.8" height="2" fill="#ececec"/><rect x="572.50" y="374" width="0.8" height="2" fill="#ececec"/><rect x="575.25" y="374" width="0.8" height="2" fill="#ececec"/><rect x="578.00" y="374" width="0.8" height="2" fill="#ececec"/><rect x="580.75" y="374" width="0.8" height="2" fill="#ececec"/><rect x="583.50" y="374" width="0.8" height="2" fill="#ececec"/><rect x="586.25" y="374" width="0.8" height="2" fill="#ececec"/><rect x="589.00" y="372" width="0.8" height="4" fill="#ececec"/><rect x="591.75" y="374" width="0.8" height="2" fill="#ececec"/><rect x="594.50" y="374" width="0.8" height="2" fill="#ececec"/><rect x="597.25" y="374" width="0.8" height="2" fill="#ececec"/><rect x="600.00" y="374" width="0.8" height="2" fill="#ececec"/><rect x="602.75" y="374" width="0.8" height="2" fill="#ececec"/><rect x="605.50" y="374" width="0.8" height="2" fill="#ececec"/><rect x="608.25" y="374" width="0.8" height="2" fill="#ececec"/><rect x="611.00" y="372" width="0.8" height="4" fill="#ececec"/><rect x="613.75" y="374" width="0.8" height="2" fill="#ececec"/><rect x="616.50" y="374" width="0.8" height="2" fill="#ececec"/><rect x="619.25" y="374" width="0.8" height="2" fill="#ececec"/><rect x="622.00" y="374" width="0.8" height="2" fill="#ececec"/><rect x="624.75" y="374" width="0.8" height="2" fill="#ececec"/><rect x="627.50" y="374" width="0.8" height="2" fill="#ececec"/><rect x="630.25" y="374" width="0.8" height="2" fill="#ececec"/><rect x="633.00" y="372" width="0.8" height="4" fill="#ececec"/><rect x="635.75" y="374" width="0.8" height="2" fill="#ececec"/><rect x="638.50" y="374" width="0.8" height="2" fill="#ececec"/><rect x="641.25" y="374" width="0.8" height="2" fill="#ececec"/><rect x="644.00" y="374" width="0.8" height="2" fill="#ececec"/><rect x="646.75" y="374" width="0.8" height="2" fill="#ececec"/><rect x="649.50" y="374" width="0.8" height="2" fill="#ececec"/><rect x="652.25" y="374" width="0.8" height="2" fill="#ececec"/><rect x="655.00" y="372" width="0.8" height="4" fill="#ececec"/><rect x="657.75" y="374" width="0.8" height="2" fill="#ececec"/><rect x="660.50" y="374" width="0.8" height="2" fill="#ececec"/><rect x="663.25" y="374" width="0.8" height="2" fill="#ececec"/><rect x="666.00" y="374" width="0.8" height="2" fill="#ececec"/><rect x="668.75" y="374" width="0.8" height="2" fill="#ececec"/><rect x="671.50" y="374" width="0.8" height="2" fill="#ececec"/><rect x="674.25" y="374" width="0.8" height="2" fill="#ececec"/><rect x="677.00" y="372" width="0.8" height="4" fill="#ececec"/><rect x="679.75" y="374" width="0.8" height="2" fill="#ececec"/><rect x="682.50" y="374" width="0.8" height="2" fill="#ececec"/><rect x="685.25" y="374" width="0.8" height="2" fill="#ececec"/><rect x="688.00" y="374" width="0.8" height="2" fill="#ececec"/><rect x="690.75" y="374" width="0.8" height="2" fill="#ececec"/><rect x="693.50" y="374" width="0.8" height="2" fill="#ececec"/><rect x="696.25" y="374" width="0.8" height="2" fill="#ececec"/><rect x="699.00" y="372" width="0.8" height="4" fill="#ececec"/></g>
    <rect x="105" y="376" width="595" height="8" fill="#e3e3e3"/>
    <rect x="105.5" y="376.5" width="4" height="7" rx="1" fill="#2f86e6"/><rect x="106.8" y="377.8" width="1.4" height="4.4" fill="#fff"/>
    <rect x="695.5" y="376.5" width="4" height="7" rx="1" fill="#2f86e6"/><rect x="696.8" y="377.8" width="1.4" height="4.4" fill="#fff"/>
    <!-- text track -->
    <rect x="105" y="384" width="595" height="40" fill="#f3f3f3"/>
    <g shape-rendering="crispEdges"><rect x="107.5" y="387" width="1" height="34" fill="#dcdcdc"/><rect x="110.3" y="387" width="1" height="34" fill="#dcdcdc"/><rect x="131.5" y="387" width="1" height="34" fill="#dcdcdc"/><rect x="134.5" y="387" width="1" height="34" fill="#dcdcdc"/><rect x="150.5" y="387" width="1" height="34" fill="#dcdcdc"/><rect x="153.3" y="387" width="1" height="34" fill="#dcdcdc"/><rect x="172.1" y="387" width="1" height="34" fill="#dcdcdc"/><rect x="174.5" y="387" width="1" height="34" fill="#dcdcdc"/><rect x="190.9" y="387" width="1" height="34" fill="#dcdcdc"/><rect x="193.5" y="387" width="1" height="34" fill="#dcdcdc"/><rect x="229.9" y="387" width="1" height="34" fill="#dcdcdc"/><rect x="232.5" y="387" width="1" height="34" fill="#dcdcdc"/><rect x="239.3" y="387" width="1" height="34" fill="#dcdcdc"/><rect x="242.0" y="387" width="1" height="34" fill="#dcdcdc"/><rect x="259.5" y="387" width="1" height="34" fill="#dcdcdc"/><rect x="262.1" y="387" width="1" height="34" fill="#dcdcdc"/><rect x="301.5" y="387" width="1" height="34" fill="#dcdcdc"/><rect x="315.0" y="387" width="1" height="34" fill="#dcdcdc"/><rect x="325.4" y="387" width="1" height="34" fill="#dcdcdc"/><rect x="346.1" y="387" width="1" height="34" fill="#dcdcdc"/><rect x="378.5" y="387" width="1" height="34" fill="#dcdcdc"/><rect x="391.3" y="387" width="1" height="34" fill="#dcdcdc"/><rect x="397.8" y="387" width="1" height="34" fill="#dcdcdc"/><rect x="416.2" y="387" width="1" height="34" fill="#dcdcdc"/><rect x="439.3" y="387" width="1" height="34" fill="#dcdcdc"/><rect x="452.5" y="387" width="1" height="34" fill="#dcdcdc"/><rect x="470.3" y="387" width="1" height="34" fill="#dcdcdc"/><rect x="502.8" y="387" width="1" height="34" fill="#dcdcdc"/><rect x="530.9" y="387" width="1" height="34" fill="#dcdcdc"/><rect x="542.8" y="387" width="1" height="34" fill="#dcdcdc"/><rect x="570.9" y="387" width="1" height="34" fill="#dcdcdc"/><rect x="596.6" y="387" width="1" height="34" fill="#dcdcdc"/><rect x="619.1" y="387" width="1" height="34" fill="#dcdcdc"/><rect x="641.0" y="387" width="1" height="34" fill="#dcdcdc"/><rect x="656.7" y="387" width="1" height="34" fill="#dcdcdc"/><rect x="674.4" y="387" width="1" height="34" fill="#dcdcdc"/></g>
    <rect x="105" y="424" width="595" height="6" fill="#f7f7f7"/>
    <path d="M116 425H124L120 428Z" fill="#e2e2e2"/>
    <rect x="105" y="430" width="595" height="1" fill="#e8e8e8"/>
    <!-- audio -->
    <rect x="105" y="431" width="590" height="20" fill="#f6f6f6"/>
    <rect x="106.5" y="433.5" width="583" height="14" fill="#fff" stroke="#e2e2e2" stroke-width="1"/>
    <path d="M107 440.5L108.2 440.9L109.4 440.6L110.8 440.5L111.6 440.1L113.0 440.3L114.4 440.5L115.3 441.0L116.4 440.4L117.8 440.8L119.2 440.3L120.7 440.6L121.4 440.5L123.0 440.1L124.0 440.5L125.7 440.5L127.3 441.1L128.0 440.1L129.0 441.0L129.9 440.3L131.7 440.7L132.5 440.6L134.1 440.3L135.1 440.2L135.8 439.7L137.4 440.4L138.1 439.6L139.5 440.7L141.1 439.7L142.2 439.6L143.0 440.7L144.7 440.3L145.5 440.6L146.5 440.7L147.8 440.1L148.7 440.2L149.7 440.4L150.5 440.4L151.4 440.3L152.2 441.3L153.6 440.3L155.0 440.7L156.5 440.5L157.7 440.4L158.5 440.2L160.0 440.6L161.7 440.3L163.4 440.7L164.5 438.6L165.9 440.9L167.0 440.7L168.2 440.3L169.3 440.0L170.5 440.9L172.2 440.4L173.5 440.6L174.7 441.3L175.7 440.2L177.3 440.7L178.2 439.8L179.7 440.4L180.6 440.9L181.7 440.8L182.7 440.4L184.2 439.8L185.6 440.6L186.5 440.0L187.7 440.8L189.5 440.6L190.5 440.2L191.4 439.8L192.5 440.1L193.7 440.7L194.8 440.9L196.2 440.7L197.4 440.4L198.3 440.9L199.6 440.4L200.7 441.3L202.2 440.5L203.4 438.1L204.6 440.9L206.3 440.1L207.9 440.3L209.2 440.7L210.6 440.2L211.6 441.4L213.0 439.6L214.3 443.5L215.6 440.5L217.1 441.4L218.8 440.3L220.0 441.3L221.3 439.7L223.0 439.5L223.8 441.0L224.8 440.3L226.1 440.8L227.5 440.1L228.7 440.3L230.0 440.3L231.2 440.3L232.2 440.2L233.2 440.1L234.8 439.9L235.6 441.3L237.3 440.2L238.2 440.2L239.1 440.9L239.9 440.2L241.5 440.5L242.4 439.9L244.2 440.5L245.0 440.5L246.1 440.7L247.0 440.2L248.6 441.3L249.8 439.9L250.8 441.6L252.2 441.4L253.7 439.4L255.3 440.9L256.9 440.3L257.7 440.3L259.3 440.1L260.3 440.8L261.2 440.4L262.4 440.2L263.9 440.5L265.4 439.7L266.9 440.5L267.9 440.7L269.7 440.9L271.3 439.6L272.4 440.3L274.0 440.7L275.8 440.7L276.9 441.5L278.3 440.5L279.7 440.7L280.4 440.7L281.2 440.7L282.2 440.5L283.9 440.3L285.3 441.4L286.1 440.4L286.9 440.8L288.3 440.8L289.8 440.9L291.4 441.1L292.9 440.6L294.3 440.2L295.7 440.4L296.9 440.4L298.3 438.4L299.7 439.6L301.2 440.4L302.6 440.3L303.7 440.4L305.3 440.2L306.5 440.3L307.6 440.9L308.6 440.2L309.8 440.5L310.6 441.4L312.2 440.2L312.9 439.5L314.4 440.8L315.4 441.3L316.5 441.5L317.7 440.6L318.7 440.2L319.4 440.5L320.8 440.8L322.4 440.2L323.3 440.9L324.9 440.0L326.2 440.8L326.9 440.2L328.0 441.1L328.8 440.6L329.8 441.5L331.3 440.6L332.8 440.3L334.2 440.7L335.9 440.8L337.6 440.3L339.2 440.3L340.2 439.6L341.2 440.7L343.0 439.8L344.0 439.4L345.6 438.1L346.6 439.7L348.0 440.7L348.9 441.1L350.3 440.7L351.5 440.1L352.7 440.0L354.3 440.7L355.9 439.4L357.5 440.3L359.0 440.4L360.6 439.4L362.0 440.4L362.8 440.5L364.4 439.8L366.1 440.5L366.8 439.9L368.4 440.5L369.7 441.6L370.7 440.7L372.2 439.9L373.0 440.3L374.4 442.8L375.4 440.3L377.0 440.2L378.0 440.7L379.8 440.3L380.7 441.5L381.8 441.3L383.0 440.5L383.8 440.4L385.0 440.3L385.8 443.5L386.9 441.6L388.6 439.9L390.2 440.6L391.6 440.7L393.4 440.2L394.4 441.2L395.2 440.7L396.8 440.6L398.1 440.3L399.5 439.3L400.8 437.9L401.6 440.7L402.7 440.6L404.4 440.2L406.1 440.7L406.9 440.9L408.3 441.6L409.8 440.8L411.4 439.6L412.6 440.2L413.6 440.8L415.0 440.2L415.9 440.6L416.7 440.4L417.7 440.4L419.2 440.7L420.6 440.7L422.1 440.9L423.7 441.1L425.0 440.9L426.7 441.4L428.2 440.8L429.9 440.6L430.8 440.9L432.3 440.6L433.7 440.9L435.4 440.2L436.8 440.5L437.6 440.5L438.3 441.2L439.2 440.7L440.0 440.6L440.8 440.6L441.6 440.2L442.6 440.2L443.5 440.6L444.2 440.2L445.5 439.3L446.9 440.8L448.5 440.6L449.7 439.4L451.2 439.9L452.4 439.8L453.8 439.8L455.2 439.6L456.4 439.4L457.7 441.4L459.0 440.3L460.0 440.6L461.5 437.8L463.3 442.9L464.0 440.5L465.3 440.6L466.9 440.3L468.2 440.5L469.2 440.2L470.2 440.8L471.2 439.3L472.5 440.4L473.9 440.8L475.4 440.5L477.1 440.3L478.5 441.3L480.1 440.8L480.9 440.6L481.8 440.8L482.6 440.4L484.1 440.4L484.9 440.2L485.6 440.3L486.8 439.7L488.5 440.2L489.6 441.6L490.8 440.6L492.5 440.4L493.6 440.5L495.0 440.1L496.2 440.8L497.3 439.7L498.2 440.4L499.3 440.8L500.5 440.8L501.5 440.5L502.6 440.0L504.1 440.3L505.1 440.6L505.9 439.4L506.6 440.3L508.3 440.4L509.3 440.3L510.2 440.5L511.3 440.8L512.4 440.3L514.0 440.3L515.1 440.6L516.2 440.4L517.7 440.5L519.2 441.6L520.6 440.2L522.2 439.4L523.3 441.3L524.3 440.6L525.2 440.4L526.5 440.1L527.7 441.6L529.2 442.8L530.9 440.6L532.2 440.7L533.8 441.0L535.5 440.4L536.9 440.6L537.6 440.4L539.0 440.7L539.8 441.3L540.9 440.5L542.4 441.3L544.2 439.9L545.1 441.4L545.8 440.2L547.2 440.8L548.2 440.0L549.7 440.1L550.6 440.7L551.7 441.5L552.6 439.8L554.3 440.1L555.9 440.6L557.2 440.5L558.9 441.2L559.8 440.6L560.7 440.4L562.1 440.8L563.6 441.3L564.6 440.0L565.6 441.2L566.7 440.4L568.2 441.0L569.3 440.8L570.4 443.0L571.2 441.3L572.2 440.3L574.0 440.8L575.5 439.9L576.9 440.9L577.7 440.5L578.7 440.4L579.9 440.4L580.8 437.8L581.5 440.4L583.3 440.5L584.9 440.5L585.9 440.8L587.2 440.5L588.9 440.8L590.0 440.6L590.8 439.3L592.3 441.2L593.4 440.2L595.2 440.8L596.1 440.5L597.1 440.6L598.7 440.8L599.7 439.5L600.7 439.9L602.2 440.2L603.3 439.7L604.5 442.9L605.3 440.2L606.0 440.0L607.4 440.3L608.6 440.9L609.4 440.1L610.9 440.5L612.6 441.4L614.3 440.2L615.1 440.8L616.6 440.3L617.7 440.5L619.0 440.4L620.3 440.6L621.4 439.6L622.9 440.3L624.4 440.5L626.1 440.1L627.6 440.1L628.5 442.7L629.7 440.2L631.0 440.4L632.3 440.3L633.1 440.5L634.6 439.7L635.7 440.1L637.3 441.1L638.1 440.7L638.8 440.6L640.5 440.6L641.6 440.8L643.0 439.9L643.9 440.5L644.8 440.7L645.8 438.6L647.3 440.6L648.2 441.2L649.8 440.3L651.6 440.2L652.8 441.1L654.5 439.5L656.3 440.2L657.5 441.3L658.8 440.4L660.3 439.7L661.6 440.7L662.7 440.2L664.0 439.4L665.6 442.3L667.3 440.2L668.6 440.7L669.8 440.5L671.6 440.3L673.0 440.1L674.8 440.2L676.0 440.3L677.3 439.4L678.2 440.7L679.6 440.3L680.8 441.3L682.5 440.5L683.7 440.1L684.7 440.5L685.6 441.4L686.7 441.4L687.4 439.7L688.6 440.5" fill="none" stroke="#666" stroke-width="0.9"/>
    <!-- bars -->
    <rect x="105" y="451" width="590" height="60" fill="#f3f3f3"/>
    <rect x="105" y="453.5" width="590" height="16" fill="#2e88e8"/>
    <rect x="105" y="473.8" width="590" height="16" fill="#2e88e8"/>
    <rect x="105" y="494" width="28.5" height="10.5" fill="#2e88e8"/><rect x="173.6" y="494" width="144.4" height="10.5" fill="#2e88e8"/><rect x="337" y="494" width="160.6" height="10.5" fill="#2e88e8"/><rect x="529" y="494" width="65.0" height="10.5" fill="#2e88e8"/><rect x="631" y="494" width="64.0" height="10.5" fill="#2e88e8"/>
    <rect x="105" y="504.5" width="595" height="7" fill="#fff"/>
    <g><path d="M392.5 461L399.5 454L406.5 461L399.5 468Z" fill="#63a6ee" opacity="0.85"/><path d="M396.0 461H403.0M399.5 457.5V464.5" stroke="#fff" stroke-width="1.4"/><path d="M392.5 481.5L399.5 474.5L406.5 481.5L399.5 488.5Z" fill="#63a6ee" opacity="0.85"/><path d="M396.0 481.5H403.0M399.5 478.0V485.0" stroke="#fff" stroke-width="1.4"/><path d="M112 501L119 494L126 501L119 508Z" fill="#63a6ee" opacity="0.85"/><path d="M115.5 501H122.5M119 497.5V504.5" stroke="#fff" stroke-width="1.4"/><path d="M238 501L245 494L252 501L245 508Z" fill="#63a6ee" opacity="0.85"/><path d="M241.5 501H248.5M245 497.5V504.5" stroke="#fff" stroke-width="1.4"/><path d="M410.5 501L417.5 494L424.5 501L417.5 508Z" fill="#63a6ee" opacity="0.85"/><path d="M414.0 501H421.0M417.5 497.5V504.5" stroke="#fff" stroke-width="1.4"/><path d="M554.8 501L561.8 494L568.8 501L561.8 508Z" fill="#63a6ee" opacity="0.85"/><path d="M558.3 501H565.3M561.8 497.5V504.5" stroke="#fff" stroke-width="1.4"/><path d="M655.6 501L662.6 494L669.6 501L662.6 508Z" fill="#63a6ee" opacity="0.85"/><path d="M659.1 501H666.1M662.6 497.5V504.5" stroke="#fff" stroke-width="1.4"/></g>
    <!-- scrollbar -->
    <rect x="695.5" y="417" width="4" height="45" rx="2" fill="#c9c9c9"/>
    <rect x="700" y="360" width="1" height="151" fill="#e6e6e6"/>
    <!-- playhead -->
    <rect x="286.8" y="370" width="1.2" height="141" fill="#ef4a4a"/>
    <path d="M282.5 362H292.5V372L287.5 376L282.5 372Z" fill="#2f7fdc"/>
    <path d="M285 365V371M287.5 365V371M290 365V371" stroke="#cfe3fb" stroke-width="0.8"/>
    <rect x="282.5" y="387" width="3" height="33" rx="1.5" fill="#fff" stroke="#3b8ae6" stroke-width="1.2"/>
    <circle cx="284" cy="402.5" r="3.2" fill="#fff" stroke="#3b8ae6" stroke-width="1.3"/>
    <!-- left column lines -->
    <rect x="0" y="360" width="744" height="1" fill="#e8e8e8"/><rect x="700" y="384" width="44" height="1" fill="#e8e8e8"/><rect x="700" y="444" width="44" height="1" fill="#efefef"/><rect x="700" y="464" width="44" height="1" fill="#efefef"/><rect x="700" y="484" width="44" height="1" fill="#efefef"/>
    <rect x="0" y="384" width="105" height="1" fill="#e8e8e8"/>
    <rect x="104.5" y="360" width="1" height="151" fill="#e8e8e8"/>
    <rect x="0" y="430" width="105" height="1" fill="#e8e8e8"/>
    <rect x="0" y="451" width="105" height="1" fill="#e8e8e8"/>
    <rect x="0" y="471" width="105" height="1" fill="#e8e8e8"/>
    <rect x="0" y="491" width="105" height="1" fill="#e8e8e8"/>
    <rect x="0" y="424" width="105" height="7" fill="#fbfbfb"/><rect x="0" y="424" width="105" height="1" fill="#e4e4e4"/><rect x="4" y="424" width="2" height="1.5" fill="#555"/><rect x="14" y="424" width="2" height="1.2" fill="#777"/><rect x="23" y="424" width="6" height="1.5" fill="#666"/><rect x="98" y="424" width="3" height="1" fill="#aaa"/>
  </svg>
  <!-- left labels -->
  <svg class="a" style="left:2px;top:72px" width="12" height="12" viewBox="0 0 12 12"><rect x="0.7" y="0.7" width="10.6" height="10.6" rx="1.5" fill="none" stroke="#555" stroke-width="1.2"/><path d="M3.5 3.5H8.5M6 3.5V9" stroke="#555" stroke-width="1.5"/></svg>
  <div class="a lt" style="left:19px;top:72px">旋转文字</div>
  <svg class="a" style="left:87px;top:72px" width="9" height="9" viewBox="0 0 9 9"><circle cx="4.5" cy="4.5" r="3.8" fill="none" stroke="#777" stroke-width="0.9"/><path d="M3.2 3.6Q3.2 2.3 4.5 2.3Q5.8 2.3 5.8 3.5Q5.8 4.3 4.5 4.8V5.6" fill="none" stroke="#777" stroke-width="0.9"/><circle cx="4.5" cy="6.8" r="0.5" fill="#777"/></svg>
  <div class="a lt" style="left:13px;top:109px">声音1</div>
  <svg class="a" style="left:78px;top:109px" width="9" height="9" viewBox="0 0 9 9"><path d="M1 3.2H3L5.5 1V8L3 5.8H1Z" fill="none" stroke="#999" stroke-width="0.9"/><path d="M6.8 3Q7.8 4.5 6.8 6" fill="none" stroke="#999" stroke-width="0.9"/></svg>
  <svg class="a trash" style="left:94px;top:109px" width="8" height="9" viewBox="0 0 8 9"><path d="M0.5 1.8H7.5M2.8 1.8V0.7H5.2V1.8M1.3 1.8L1.8 8.5H6.2L6.7 1.8M3 3.5V7M5 3.5V7" fill="none" stroke="#888" stroke-width="0.8"/></svg>
  <svg class="a" style="left:2px;top:129px" width="13" height="12" viewBox="0 0 13 12"><g fill="none" stroke="#555" stroke-width="1.3"><circle cx="3" cy="3" r="2"/><circle cx="10" cy="3" r="2"/><circle cx="3" cy="9" r="2"/><circle cx="10" cy="9" r="2"/></g></svg>
  <div class="a lt" style="left:19px;top:129px">装饰行</div>
  <div class="a lt" style="left:19px;top:149px">装饰行2</div>
  <svg class="a trash" style="left:94px;top:150px" width="8" height="9" viewBox="0 0 8 9"><path d="M0.5 1.8H7.5M2.8 1.8V0.7H5.2V1.8M1.3 1.8L1.8 8.5H6.2L6.7 1.8M3 3.5V7M5 3.5V7" fill="none" stroke="#888" stroke-width="0.8"/></svg>
  <div class="a lt" style="left:19px;top:169px">装饰行3</div>
  <svg class="a trash" style="left:94px;top:170px" width="8" height="9" viewBox="0 0 8 9"><path d="M0.5 1.8H7.5M2.8 1.8V0.7H5.2V1.8M1.3 1.8L1.8 8.5H6.2L6.7 1.8M3 3.5V7M5 3.5V7" fill="none" stroke="#888" stroke-width="0.8"/></svg>
  <!-- right buttons -->
  <div class="a rb" style="top:100px"><i></i><b>背景</b></div>
  <div class="a rb" style="top:121px"><i></i><b>场景</b></div>
  <div class="a rb" style="top:141px"><i></i><b>音轨</b></div>
  <div class="a rb" style="top:160px"><i style="left:1px"></i><b style="right:2px">装饰行</b></div>
</div>
</body></html>
